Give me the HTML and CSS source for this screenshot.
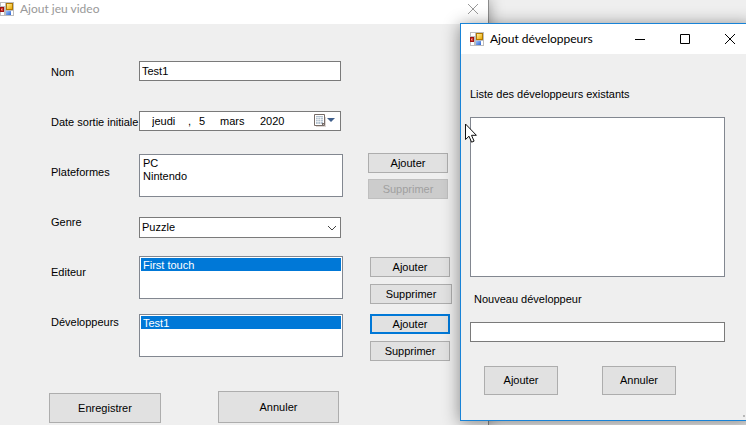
FILE: index.html
```html
<!DOCTYPE html>
<html lang="fr">
<head>
<meta charset="utf-8">
<title>Ajout jeu video</title>
<link rel="stylesheet" href="styles.css">
</head>
<body>
<svg width="0" height="0" class="defs" aria-hidden="true">
  <defs>
    <linearGradient id="gold" x1="0" y1="0" x2="1" y2="1"><stop offset="0" stop-color="#fff0a0"/><stop offset="1" stop-color="#eaa800"/></linearGradient>
    <linearGradient id="blue" x1="0" y1="0" x2="1" y2="1"><stop offset="0" stop-color="#9cc4ff"/><stop offset="1" stop-color="#2c62d0"/></linearGradient>
    <symbol id="app" viewBox="0 0 14 14">
      <path fill="#bdbdbd" d="M0 0h14v14H0z"/>
      <path fill="#fff" d="M1 1h4v3H1zM1 10h3v3H1zM11 9h2v4h-2z"/>
      <path fill="#a01010" d="M0 5h4v5H0z"/><path fill="#d84a3c" d="M1 6h2v3H1z"/><path fill="#f0a090" d="M1 7h1v1H1z"/>
      <path fill="#b07800" d="M6 1h7v7H6z"/><path fill="url(#gold)" d="M7 2h5v5H7z"/>
      <path fill="url(#blue)" d="M6 9h5v4H6z"/>
    </symbol>
  </defs>
</svg>

<main class="window main-window">
  <header class="titlebar">
    <svg class="app-icon" aria-hidden="true"><use href="#app"/></svg>
    <h1 class="title">Ajout jeu video</h1>
    <button class="caption" aria-label="Fermer"><svg width="10" height="10" viewBox="0 0 10 10"><path d="M0 0l10 10M10 0L0 10"/></svg></button>
  </header>
  <form class="form">
    <div class="fields">
      <div class="labels">
        <label for="nom">Nom</label>
        <label for="jour">Date sortie initiale</label>
        <label for="plateformes">Plateformes</label>
        <label for="genre">Genre</label>
        <label for="editeur">Editeur</label>
        <label for="devs">Développeurs</label>
      </div>
      <div class="controls">
        <div class="row row-text"><input class="box" id="nom" type="text" value="Test1"></div>
        <div class="row row-date">
          <div class="box date">
            <input class="weekday" aria-label="Jour de semaine" value="jeudi"><span class="comma">,</span>
            <input class="day" id="jour" value="5">
            <input class="month" aria-label="Mois" value="mars">
            <input class="year" aria-label="Année" value="2020">
            <button type="button" class="calendar" aria-label="Calendrier">
              <svg width="21" height="14" viewBox="0 0 21 14">
                <path fill="#ddd6d2" d="M2 3h10v10H2z"/>
                <path fill="#fff" stroke="#766c68" d="M.5.5h10v11H.5z"/>
                <path fill="#b3c2cf" d="M2 2h7v8H2z"/>
                <path stroke="#fff" d="M2 3.500h7M2 5.500h7M2 7.500h7" stroke-width=".6"/>
                <path stroke="#fff" d="M4 3v7M6.500 3v7" stroke-width=".6"/>
                <path fill="#766c68" d="M8 12V9h3z"/>
                <path fill="#3f5f8c" d="M13 4h8l-4 4z"/>
              </svg>
            </button>
          </div>
        </div>
        <div class="row row-platforms">
          <select class="list" id="plateformes" size="3"><option>PC</option><option>Nintendo</option></select>
        </div>
        <div class="row row-genre">
          <select class="box combo" id="genre"><option>Puzzle</option></select>
          <svg class="chevron" width="10" height="6" viewBox="0 0 10 6" aria-hidden="true"><path d="M1 1l4 4 4-4"/></svg>
        </div>
        <div class="row row-editor">
          <select class="list" id="editeur" size="3"><option selected>First touch</option></select>
        </div>
        <div class="row">
          <select class="list" id="devs" size="3"><option selected>Test1</option></select>
        </div>
      </div>
      <div class="side">
        <div class="pair platforms"><button type="button">Ajouter</button><button type="button" disabled>Supprimer</button></div>
        <div class="pair"><button type="button">Ajouter</button><button type="button" class="wide">Supprimer</button></div>
        <div class="pair"><button type="button" class="default">Ajouter</button><button type="button">Supprimer</button></div>
      </div>
    </div>
    <div class="actions">
      <button type="button" class="save">Enregistrer</button>
      <button type="button" class="cancel">Annuler</button>
    </div>
  </form>
</main>

<section class="window dialog" role="dialog" aria-labelledby="dialog-title">
  <header class="titlebar">
    <svg class="app-icon" aria-hidden="true"><use href="#app"/></svg>
    <h2 class="title" id="dialog-title">Ajout développeurs</h2>
    <button class="caption" aria-label="Réduire"><svg width="10" height="10" viewBox="0 0 10 10"><path d="M0 5.500h10"/></svg></button>
    <button class="caption" aria-label="Agrandir"><svg width="10" height="10" viewBox="0 0 10 10"><path d="M.5.5h9v9h-9z"/></svg></button>
    <button class="caption" aria-label="Fermer"><svg width="10" height="10" viewBox="0 0 10 10"><path d="M0 0l10 10M10 0L0 10"/></svg></button>
  </header>
  <form class="dialog-form">
    <label for="existants">Liste des développeurs existants</label>
    <select class="list existing" id="existants" size="12"></select>
    <label class="new-label" for="nouveau">Nouveau développeur</label>
    <input class="box" id="nouveau" type="text">
    <div class="dialog-actions"><button type="button">Ajouter</button><button type="button">Annuler</button></div>
  </form>
  <span class="grip"></span>
</section>

<svg class="cursor" width="13" height="20" viewBox="0 0 13 20" aria-hidden="true"><path d="M.5 1v15.500l3.500-3.300 2.600 6 2.500-1.100-2.600-5.800h4.900z"/></svg>
</body>
</html>
```

FILE: styles.css
```css
* { box-sizing: border-box; }

body {
  margin: 0;
  min-height: 100vh;
  position: relative;
  overflow: hidden;
  background: #efefef;
  color: #000;
  font: 11px/13px "Liberation Sans", Arial, sans-serif;
}

button, input, select { font: inherit; color: inherit; margin: 0; border-radius: 0; }

.defs { position: absolute; }

.window { position: absolute; background: #efefef; }

.main-window {
  top: 0;
  left: 0;
  bottom: 0;
  width: 489px;
  border-right: 1px solid #8a8a8a;
  box-shadow: 0 0 14px rgba(0, 0, 0, 0.4);
}

.titlebar { display: flex; align-items: center; background: #fff; }
.title {
  flex: 1;
  margin: 0;
  font: 12px/16px Lato, sans-serif;
}
.app-icon { width: 14px; height: 14px; flex: none; }
.caption {
  display: flex;
  justify-content: center;
  align-items: center;
  padding: 0;
  border: 0;
  background: none;
}
.caption svg { fill: none; stroke: #000; overflow: visible; }

.main-window .titlebar { height: 24px; padding: 0 10px 7px 0; color: #999; }
.main-window .title { padding-left: 6px; }
.main-window .caption svg { stroke: #999; }

.fields { display: flex; padding-top: 23px; }
.labels { width: 139px; padding-left: 51px; }
.labels label { display: flex; align-items: center; height: 50px; white-space: nowrap; }
.controls { width: 204px; padding-top: 14px; }
.row { position: relative; }
.row-text { height: 50px; }
.row-date { height: 43px; }
.row-platforms { height: 63px; }
.row-genre { height: 39px; }
.row-editor { height: 58px; }

.box {
  display: block;
  width: 202px;
  height: 20px;
  padding: 0 2px;
  border: 1px solid #7a7a7a;
  background: #fff;
}
.date { display: flex; align-items: center; padding: 0 5px 0 12px; }
.date input { padding: 0; border: 0; background: none; }
.weekday { width: 36px; }
.comma { width: 11px; }
.day { width: 21px; }
.month { width: 40px; }
.year { width: 54px; }
.calendar { padding: 0; border: 0; background: none; line-height: 0; }

.combo { height: 21px; appearance: none; }
.chevron { position: absolute; top: 8px; right: 6px; fill: none; stroke: #444; }

.list {
  display: block;
  width: 100%;
  height: 43px;
  padding: 1px;
  border: 1px solid #828790;
  background: #fff;
  appearance: none;
  overflow: hidden;
}
.list option { min-height: 13px; padding: 1px 2px 0; line-height: 12px; }
.list option:checked { background: #0078d7 linear-gradient(#0078d7, #0078d7); color: #fff; }

.side { padding: 106px 0 0 27px; }
.pair { display: flex; flex-direction: column; gap: 7px; margin-bottom: 10px; }
.pair.platforms { gap: 6px; margin: 0 0 58px -2px; }

.pair button, .actions button, .dialog-actions button {
  width: 80px;
  height: 20px;
  padding: 0;
  border: 1px solid #adadad;
  background: #e1e1e1;
}
.pair .wide { width: 82px; }
.pair .default { border: 2px solid #0078d7; }
.pair button:disabled { background: #ccc; border-color: #bfbfbf; color: #a0a0a0; }

.actions { display: flex; align-items: flex-end; gap: 57px; padding: 20px 0 0 49px; }
.actions .save { width: 112px; height: 30px; }
.actions .cancel { width: 121px; height: 32px; }

.dialog {
  top: 23px;
  left: 460px;
  right: -7px;
  border: 1px solid #1883d7;
  box-shadow: 0 2px 16px rgba(0, 0, 0, 0.45);
}
.dialog .titlebar { height: 30px; padding-left: 9px; }
.dialog .title { padding-left: 6px; }
.dialog .caption { width: 45px; height: 30px; }
.dialog-form { padding: 34px 27px 25px 9px; }
.dialog-form label { display: block; }
.dialog-form .existing { width: 255px; height: 160px; margin: 16px 0; }
.dialog-form .new-label { padding-left: 4px; margin-bottom: 16px; }
.dialog-form .box { width: 255px; }
.dialog-actions { display: flex; gap: 44px; padding: 24px 0 0 14px; }
.dialog-actions button { width: 74px; height: 29px; }
.grip { position: absolute; right: 7px; bottom: 3px; width: 2px; height: 2px; background: #b8b8b8; }

.cursor { position: absolute; left: 465px; top: 123px; fill: #fff; stroke: #111; }
```
